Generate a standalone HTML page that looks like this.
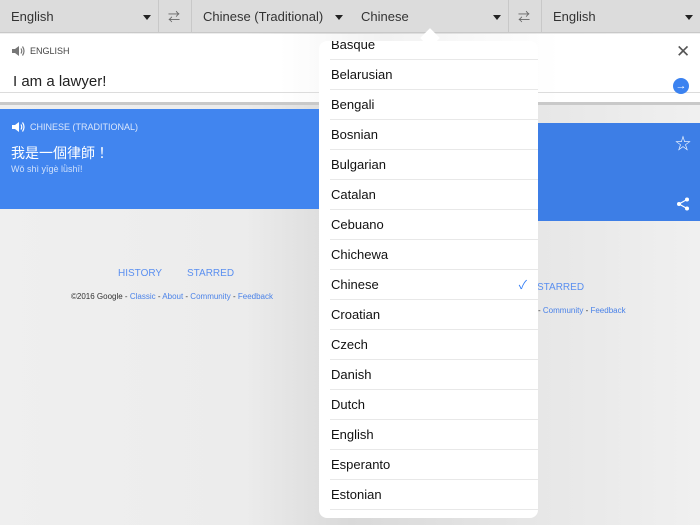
<!DOCTYPE html>
<html><head><meta charset="utf-8"><style>
*{margin:0;padding:0;box-sizing:border-box}
body{width:700px;height:525px;overflow:hidden;position:relative;font-family:"Liberation Sans","Noto Sans CJK TC",sans-serif;background:linear-gradient(90deg,#efefef 0%,#ececec 35%,#d9d9d9 50%,#e6e6e6 75%,#f0f0f0 100%)}
.a{position:absolute}
.bar{top:0;left:0;width:700px;height:33px;background:#dcdcdc;border-bottom:1px solid #c8c8c8}
.bt{font-size:13px;color:#333;top:9px}
.tri{width:0;height:0;border-left:4px solid transparent;border-right:4px solid transparent;border-top:5px solid #222}
.vl{top:0;width:1px;height:33px;background:#c8c8c8}
.sw{font-size:12px;color:#666;top:8px}
.item{left:330px;width:208px;height:30px;border-bottom:1px solid #e8e8e8;font-size:13px;color:#111;padding-left:1px;line-height:30px}
a{color:#4a82e8;text-decoration:none}
</style></head><body>
<div class="a bar"></div>
<div class="a bt" style="left:11px">English</div><div class="a tri" style="left:143px;top:15px"></div>
<div class="a vl" style="left:158px"></div><div class="a sw" style="left:168px">⇄</div><div class="a vl" style="left:191px"></div>
<div class="a bt" style="left:203px">Chinese (Traditional)</div><div class="a tri" style="left:335px;top:15px"></div>
<div class="a bt" style="left:361px">Chinese</div><div class="a tri" style="left:493px;top:15px"></div>
<div class="a vl" style="left:508px"></div><div class="a sw" style="left:518px">⇄</div><div class="a vl" style="left:541px"></div>
<div class="a bt" style="left:553px">English</div><div class="a tri" style="left:685px;top:15px"></div>

<div class="a" style="left:0;top:34px;width:700px;height:68px;background:linear-gradient(90deg,#fff 0%,#fff 40%,#f2f2f2 55%,#fff 80%)"></div>
<div class="a" style="left:0;top:92px;width:700px;height:1px;background:#dcdcdc"></div>
<div class="a" style="left:0;top:102px;width:700px;height:3px;background:#c9c9c9"></div>
<svg class="a" style="left:12px;top:45px" width="13" height="12" viewBox="0 0 13 12"><path d="M0 4h3l4-3v10l-4-3H0z" fill="#777"/><path d="M9 3.5q1.5 2.5 0 5M10.5 1.5q3 4.5 0 9" stroke="#777" stroke-width="1.2" fill="none"/></svg>
<div class="a" style="left:30px;top:46px;font-size:9px;color:#444">ENGLISH</div>
<div class="a" style="left:13px;top:73px;font-size:15px;color:#222">I am a lawyer!</div>
<div class="a" style="left:676px;top:42px;font-size:17px;color:#555">✕</div>
<div class="a" style="left:673px;top:78px;width:16px;height:16px;border-radius:50%;background:#3b82f0;color:#fff;font-size:11px;line-height:16px;text-align:center">→</div>

<div class="a" style="left:0;top:109px;width:330px;height:100px;background:#4185ef"></div>
<div class="a" style="left:530px;top:123px;width:170px;height:98px;background:#3d7ee6"></div>
<svg class="a" style="left:12px;top:121px" width="13" height="12" viewBox="0 0 13 12"><path d="M0 4h3l4-3v10l-4-3H0z" fill="#fff"/><path d="M9 3.5q1.5 2.5 0 5M10.5 1.5q3 4.5 0 9" stroke="#fff" stroke-width="1.2" fill="none"/></svg>
<div class="a" style="left:30px;top:122px;font-size:9px;color:#dbe7fc">CHINESE (TRADITIONAL)</div>
<div class="a" style="left:11px;top:143px;font-size:14px;color:#fff">我是一個律師！</div>
<div class="a" style="left:11px;top:164px;font-size:9px;color:#cfe0fb">Wǒ shì yīgè lǜshī!</div>
<div class="a" style="left:675px;top:130px;font-size:16px;color:#fff">☆</div>
<svg class="a" style="left:676px;top:197px" width="14" height="14" viewBox="0 0 14 14"><circle cx="11" cy="2.5" r="2" fill="#fff"/><circle cx="3" cy="7" r="2" fill="#fff"/><circle cx="11" cy="11.5" r="2" fill="#fff"/><path d="M11 2.5L3 7L11 11.5" stroke="#fff" stroke-width="1.2" fill="none"/></svg>

<div class="a" style="left:118px;top:268px;font-size:10px;color:#5a8ff0">HISTORY</div>
<div class="a" style="left:187px;top:268px;font-size:10px;color:#5a8ff0">STARRED</div>
<div class="a" style="left:71px;top:292px;font-size:8px;color:#333">©2016 Google - <a>Classic</a> - <a>About</a> - <a>Community</a> - <a>Feedback</a></div>
<div class="a" style="left:537px;top:282px;font-size:10px;color:#5a8ff0">STARRED</div>
<div class="a" style="left:538px;top:306px;font-size:8px;color:#333">- <a>Community</a> - <a>Feedback</a></div>

<div class="a" style="left:423px;top:31px;width:14px;height:14px;background:#fff;transform:rotate(45deg)"></div>
<div class="a" style="left:319px;top:41px;width:219px;height:477px;background:#fff;border-radius:8px;overflow:hidden">
<div style="position:relative;top:-11px">
<div class="a item" style="left:11px;top:0">Basque</div>
<div class="a item" style="left:11px;top:30px">Belarusian</div>
<div class="a item" style="left:11px;top:60px">Bengali</div>
<div class="a item" style="left:11px;top:90px">Bosnian</div>
<div class="a item" style="left:11px;top:120px">Bulgarian</div>
<div class="a item" style="left:11px;top:150px">Catalan</div>
<div class="a item" style="left:11px;top:180px">Cebuano</div>
<div class="a item" style="left:11px;top:210px">Chichewa</div>
<div class="a item" style="left:11px;top:240px">Chinese<span style="position:absolute;right:11px;color:#2f7cf6;font-size:12px">✓</span></div>
<div class="a item" style="left:11px;top:270px">Croatian</div>
<div class="a item" style="left:11px;top:300px">Czech</div>
<div class="a item" style="left:11px;top:330px">Danish</div>
<div class="a item" style="left:11px;top:360px">Dutch</div>
<div class="a item" style="left:11px;top:390px">English</div>
<div class="a item" style="left:11px;top:420px">Esperanto</div>
<div class="a item" style="left:11px;top:450px">Estonian</div>
<div class="a item" style="left:11px;top:480px;color:transparent">Filipino</div>
</div></div>
</body></html>
